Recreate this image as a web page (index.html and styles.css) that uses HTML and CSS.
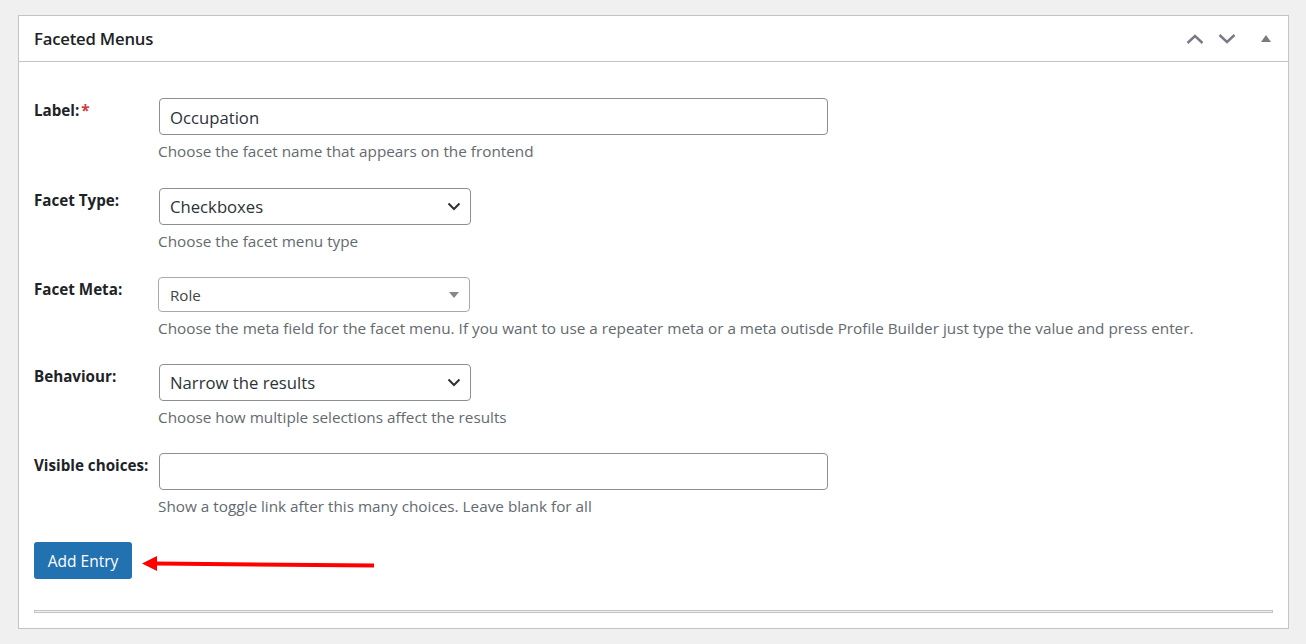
FILE: index.html
```html
<!DOCTYPE html>
<html lang="en">
<head>
<meta charset="UTF-8">
<meta name="viewport" content="width=device-width, initial-scale=1.0">
<title>Faceted Menus</title>
<link rel="stylesheet" href="styles.css">
</head>
<body>
    <div class="postbox">
        <div class="postbox-header">
            <h2>Faceted Menus</h2>
            <div class="handle-actions">
                <svg class="handle-icon" width="18" height="10" viewBox="0 0 18 10"><path d="M1.5 9 L9 2 L16.5 9" fill="none" stroke="#787c82" stroke-width="2.4"/></svg>
                <svg class="handle-icon" width="18" height="10" viewBox="0 0 18 10"><path d="M1.5 1 L9 8 L16.5 1" fill="none" stroke="#787c82" stroke-width="2.4"/></svg>
                <svg class="toggle-icon" width="10" height="7" viewBox="0 0 10 7"><path d="M0 7 L5 0 L10 7 Z" fill="#787c82"/></svg>
            </div>
        </div>
        <div class="inside">
            <div class="field-row first">
                <label class="field-label" for="facet-label">Label:<span class="required">*</span></label>
                <div class="field-body">
                    <input id="facet-label" class="text-input wide" type="text" value="Occupation">
                    <p class="description">Choose the facet name that appears on the frontend</p>
                </div>
            </div>
            <div class="field-row">
                <label class="field-label">Facet Type:</label>
                <div class="field-body">
                    <div class="select-box">
                        <span>Checkboxes</span>
                        <svg width="14" height="9" viewBox="0 0 14 9"><path d="M1.5 1.5 L7 7 L12.5 1.5" fill="none" stroke="#2c3338" stroke-width="2"/></svg>
                    </div>
                    <p class="description">Choose the facet menu type</p>
                </div>
            </div>
            <div class="field-row">
                <label class="field-label">Facet Meta:</label>
                <div class="field-body">
                    <div class="chosen-box">
                        <span>Role</span>
                        <svg width="10" height="6" viewBox="0 0 10 6"><path d="M0 0 L10 0 L5 6 Z" fill="#888"/></svg>
                    </div>
                    <p class="description">Choose the meta field for the facet menu. If you want to use a repeater meta or a meta outisde Profile Builder just type the value and press enter.</p>
                </div>
            </div>
            <div class="field-row">
                <label class="field-label">Behaviour:</label>
                <div class="field-body">
                    <div class="select-box">
                        <span>Narrow the results</span>
                        <svg width="14" height="9" viewBox="0 0 14 9"><path d="M1.5 1.5 L7 7 L12.5 1.5" fill="none" stroke="#2c3338" stroke-width="2"/></svg>
                    </div>
                    <p class="description">Choose how multiple selections affect the results</p>
                </div>
            </div>
            <div class="field-row">
                <label class="field-label" for="visible-choices">Visible choices:</label>
                <div class="field-body">
                    <input id="visible-choices" class="text-input wide" type="text" value="">
                    <p class="description">Show a toggle link after this many choices. Leave blank for all</p>
                </div>
            </div>
            <div class="button-row">
                <button class="button-primary">Add Entry</button>
                <svg class="arrow" width="236" height="18" viewBox="0 0 236 18"><path d="M14 6.6 L232 8.6 L232 12.4 L14 10.6 Z" fill="#f00"/><path d="M0 8.6 L15 1 L15 16 Z" fill="#f00"/></svg>
            </div>
            <div class="separator"></div>
        </div>
    </div>
</body>
</html>
```

FILE: styles.css
```css
body {
    margin: 0;
    padding: 15px 17px 15px 18px;
    background-color: #f0f0f1;
    font-family: "Open Sans", sans-serif;
    color: #1d2327;
}
.postbox {
    background: #FFFFFF;
    border: 1px solid #c3c4c7;
}
.postbox-header {
    display: flex;
    align-items: center;
    justify-content: space-between;
    height: 45px;
    border-bottom: 1px solid #c3c4c7;
    padding: 0 17px 0 15px;
}
.postbox-header h2 {
    margin: 0;
    font-size: 16.7px;
    font-weight: 600;
    color: #1d2327;
    letter-spacing: -0.2px;
}
.handle-actions {
    display: flex;
    align-items: center;
}
.handle-icon {
    margin-left: 14px;
}
.toggle-icon {
    margin-left: 25px;
}
.inside {
    padding: 36px 15px 15px 15px;
}
.field-row {
    display: flex;
    margin-bottom: 26px;
}
.field-row.first {
    margin-bottom: 27px;
}
.field-label {
    width: 125px;
    flex-shrink: 0;
    padding-top: 2px;
    font-size: 15.2px;
    line-height: 20px;
    font-weight: 700;
    color: #1d2327;
}
.required {
    color: #d63638;
    margin-left: 2px;
}
.field-body {
    display: flex;
    flex-direction: column;
    align-items: flex-start;
}
.text-input {
    box-sizing: border-box;
    height: 37px;
    padding: 2px 10px 0 10px;
    border: 1px solid #8c8f94;
    border-radius: 4px;
    font-family: "Open Sans", sans-serif;
    font-size: 16.7px;
    color: #2c3338;
}
.wide {
    width: 669px;
}
.select-box {
    box-sizing: border-box;
    display: flex;
    align-items: center;
    justify-content: space-between;
    width: 312px;
    height: 37px;
    padding: 0 9px 0 10px;
    border: 1px solid #8c8f94;
    border-radius: 4px;
    font-size: 16.7px;
    color: #2c3338;
}
.chosen-box {
    box-sizing: border-box;
    display: flex;
    align-items: center;
    justify-content: space-between;
    width: 312px;
    height: 35px;
    margin-left: -1px;
    padding: 0 10px 0 11px;
    border: 1px solid #aaa;
    border-radius: 4px;
    font-size: 15.2px;
    color: #444;
}
.description {
    margin: 6px 0 0 -1px;
    font-size: 15.3px;
    line-height: 20px;
    color: #646970;
}
.button-row {
    display: flex;
    align-items: center;
    margin-top: 2px;
}
.button-primary {
    width: 98px;
    height: 37px;
    border: none;
    border-radius: 3px;
    background: #2271b1;
    color: #FFFFFF;
    font-family: "Open Sans", sans-serif;
    font-size: 15.5px;
    cursor: pointer;
}
.arrow {
    margin-left: 10px;
    margin-top: 6px;
}
.separator {
    margin-top: 31px;
    height: 1px;
    border: 1px solid #c3c4c7;
    background: #f0f0f1;
}
```
